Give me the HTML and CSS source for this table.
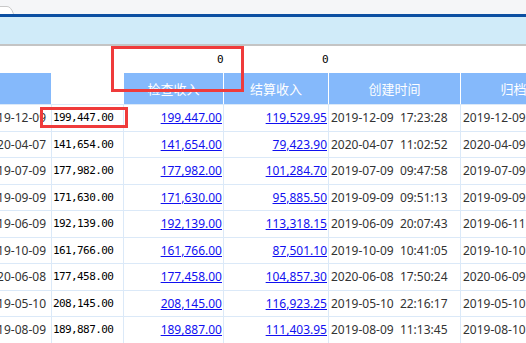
FILE: index.html
```html
<!DOCTYPE html>
<html lang="zh-CN">
<head>
<meta charset="utf-8">
<title>收入列表</title>
<link rel="stylesheet" href="styles.css">
</head>
<body>
<div class="topbar">
  <svg class="tab" width="14" height="8" viewBox="0 0 14 8"><path d="M0 0.5 H7 Q11 0.5 13.5 8 H0 Z" fill="#ffffff"/><path d="M0 0.5 H7 Q11 0.5 13.5 8" fill="none" stroke="#c9c9c9" stroke-width="1"/></svg>
</div>
<div class="navline"></div>
<div class="toolbar"></div>
<div class="sep"></div>
<div class="viewport">
  <div class="grid">
    <div class="sumrow">
      <div class="c ca"></div><div class="c cb"></div>
      <div class="c cc num mono">0</div>
      <div class="c cd num mono">0</div>
      <div class="c ce"></div><div class="c cf"></div>
    </div>
    <div class="hrow">
      <div class="h ca"></div>
      <div class="h cb blank"></div>
      <div class="h cc">检查收入</div>
      <div class="h cd">结算收入</div>
      <div class="h ce">创建时间</div>
      <div class="h cf">归档时间</div>
    </div>
    <div class="row"><div class="c ca date">2019-12-09</div><div class="c cb mono">199,447.00</div><div class="c cc num"><a href="#">199,447.00</a></div><div class="c cd num"><a href="#">119,529.95</a></div><div class="c ce">2019-12-09&nbsp;&nbsp;17:23:28</div><div class="c cf">2019-12-09&nbsp;&nbsp;17:30:12</div></div>
    <div class="row"><div class="c ca date">2020-04-07</div><div class="c cb mono">141,654.00</div><div class="c cc num"><a href="#">141,654.00</a></div><div class="c cd num"><a href="#">79,423.90</a></div><div class="c ce">2020-04-07&nbsp;&nbsp;11:02:52</div><div class="c cf">2020-04-09&nbsp;&nbsp;10:15:40</div></div>
    <div class="row"><div class="c ca date">2019-07-09</div><div class="c cb mono">177,982.00</div><div class="c cc num"><a href="#">177,982.00</a></div><div class="c cd num"><a href="#">101,284.70</a></div><div class="c ce">2019-07-09&nbsp;&nbsp;09:47:58</div><div class="c cf">2019-07-09&nbsp;&nbsp;16:20:31</div></div>
    <div class="row"><div class="c ca date">2019-09-09</div><div class="c cb mono">171,630.00</div><div class="c cc num"><a href="#">171,630.00</a></div><div class="c cd num"><a href="#">95,885.50</a></div><div class="c ce">2019-09-09&nbsp;&nbsp;09:51:13</div><div class="c cf">2019-09-09&nbsp;&nbsp;15:02:44</div></div>
    <div class="row"><div class="c ca date">2019-06-09</div><div class="c cb mono">192,139.00</div><div class="c cc num"><a href="#">192,139.00</a></div><div class="c cd num"><a href="#">113,318.15</a></div><div class="c ce">2019-06-09&nbsp;&nbsp;20:07:43</div><div class="c cf">2019-06-11&nbsp;&nbsp;09:12:05</div></div>
    <div class="row"><div class="c ca date">2019-10-09</div><div class="c cb mono">161,766.00</div><div class="c cc num"><a href="#">161,766.00</a></div><div class="c cd num"><a href="#">87,501.10</a></div><div class="c ce">2019-10-09&nbsp;&nbsp;10:41:05</div><div class="c cf">2019-10-10&nbsp;&nbsp;08:33:19</div></div>
    <div class="row"><div class="c ca date">2020-06-08</div><div class="c cb mono">177,458.00</div><div class="c cc num"><a href="#">177,458.00</a></div><div class="c cd num"><a href="#">104,857.30</a></div><div class="c ce">2020-06-08&nbsp;&nbsp;17:50:24</div><div class="c cf">2020-06-09&nbsp;&nbsp;10:02:56</div></div>
    <div class="row"><div class="c ca date">2019-05-10</div><div class="c cb mono">208,145.00</div><div class="c cc num"><a href="#">208,145.00</a></div><div class="c cd num"><a href="#">116,923.25</a></div><div class="c ce">2019-05-10&nbsp;&nbsp;22:16:17</div><div class="c cf">2019-05-10&nbsp;&nbsp;23:01:38</div></div>
    <div class="row"><div class="c ca date">2019-08-09</div><div class="c cb mono">189,887.00</div><div class="c cc num"><a href="#">189,887.00</a></div><div class="c cd num"><a href="#">111,403.95</a></div><div class="c ce">2019-08-09&nbsp;&nbsp;11:13:45</div><div class="c cf">2019-08-10&nbsp;&nbsp;09:40:27</div></div>
  </div>
</div>
<div class="mark mark-sum"></div>
<div class="mark mark-cell"></div>
</body>
</html>
```
FILE: styles.css
```css
html, body {
  margin: 0;
  padding: 0;
  overflow: hidden;
  background: #ffffff;
}
body {
  width: 526px;
  height: 343px;
  position: relative;
  font-family: "Noto Sans", "Noto Sans CJK SC", sans-serif;
  font-size: 12px;
  color: #333333;
}
.topbar {
  height: 14px;
  background: #f5f6f8;
  display: flex;
  align-items: flex-end;
}
.tab {
  display: block;
}
.navline {
  height: 3px;
  background: #0b4fa2;
}
.toolbar {
  height: 27px;
  background: #d0ebf9;
}
.sep {
  height: 2px;
  background: #c4c4c4;
}
.viewport {
  width: 526px;
  overflow: hidden;
}
.grid {
  width: 612px;
  margin-left: -19px;
  display: flex;
  flex-direction: column;
}
.sumrow, .hrow, .row {
  display: flex;
  flex: none;
}
.sumrow {
  height: 27px;
}
.hrow {
  height: 32px;
  box-sizing: border-box;
  border-bottom: 1px solid #dbe9f8;
}
.row {
  height: 26.5px;
  box-sizing: border-box;
  border-bottom: 1px solid #dbe9f8;
}
.c, .h {
  flex: none;
  box-sizing: border-box;
  display: flex;
  align-items: center;
  white-space: nowrap;
  overflow: hidden;
}
.row .c {
  border-right: 1px solid #dbe9f8;
  padding-left: 2px;
}
.sumrow .c {
  padding-left: 2px;
}
.h {
  background: #85b9fb;
  border-right: 1px solid #ffffff;
  justify-content: center;
  color: #ffffff;
  font-family: "Noto Sans CJK SC", sans-serif;
  font-size: 13px;
}
.h.blank {
  background: #ffffff;
}
.ca { width: 71px; }
.cb { width: 72px; }
.cc { width: 100px; }
.cd { width: 105px; }
.ce { width: 132px; }
.cf { width: 132px; }
.row .c.date {
  justify-content: flex-end;
  padding-right: 5px;
}
.row .c.num, .sumrow .c.num {
  justify-content: flex-end;
  padding-right: 1px;
}
.mono {
  font-family: "DejaVu Sans Mono", monospace;
  font-size: 11px;
  letter-spacing: -0.6px;
  color: #000000;
}
.row .c.mono {
  padding-left: 1px;
}
.num a {
  color: #1010f0;
  text-decoration: underline;
}
.mark {
  position: absolute;
  box-sizing: border-box;
  border: 3px solid #ef3b3b;
}
.mark-sum {
  left: 111px;
  top: 46px;
  width: 133px;
  height: 46px;
}
.mark-cell {
  left: 40px;
  top: 107px;
  width: 88px;
  height: 21px;
}
```
